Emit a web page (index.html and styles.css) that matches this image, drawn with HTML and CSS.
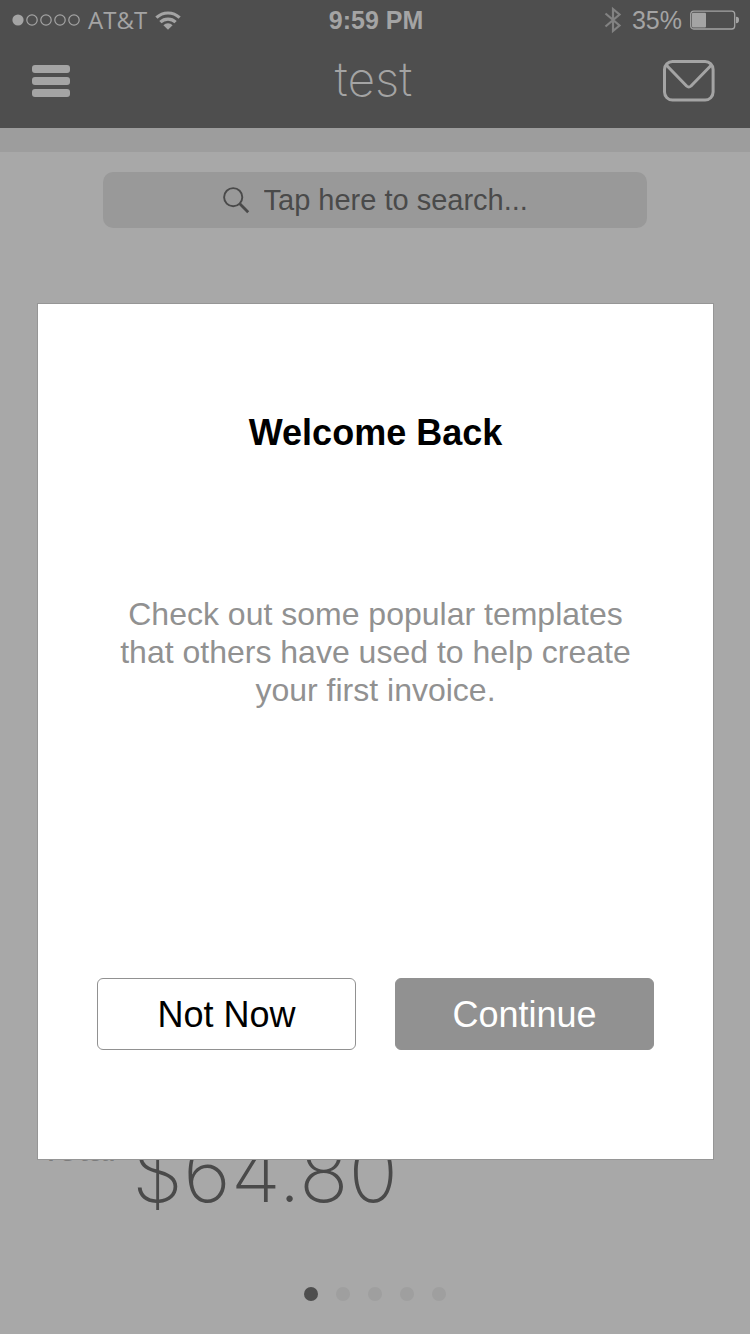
FILE: index.html
```html
<!DOCTYPE html>
<html lang="en">
<head>
<meta charset="utf-8">
<meta name="viewport" content="width=device-width, initial-scale=1">
<title>test</title>
<link rel="stylesheet" href="styles.css">
</head>
<body>
<div class="app">
  <header class="header">
    <div class="status">
      <div class="status-left">
        <svg class="signal" width="68" height="12" viewBox="0 0 68 12" aria-hidden="true">
          <circle cx="6" cy="6" r="5.6" fill="currentColor"/>
          <g fill="none" stroke="currentColor" stroke-width="1.2">
            <circle cx="20" cy="6" r="5.2"/><circle cx="34" cy="6" r="5.2"/><circle cx="48" cy="6" r="5.2"/><circle cx="62" cy="6" r="5.2"/>
          </g>
        </svg>
        <span class="carrier">AT&amp;T</span>
        <svg class="wifi" width="26" height="19" viewBox="0 0 26 19" aria-hidden="true">
          <g fill="none" stroke="currentColor" stroke-width="3.2">
            <path d="M1.4 6.7A16.7 16.7 0 0 1 24.6 6.7"/>
            <path d="M5.4 11.2A11 11 0 0 1 20.6 11.2"/>
          </g>
          <path d="M8.4 14.2A6.3 6.3 0 0 1 17.6 14.2L13 18.8Z" fill="currentColor"/>
        </svg>
      </div>
      <time class="clock">9:59 PM</time>
      <div class="status-right">
        <svg class="bluetooth" width="18" height="28" viewBox="0 0 18 28" aria-hidden="true">
          <path d="M1.5 7.5L15.5 19.5L9 25V3L15.5 8.5L1.5 20.5" fill="none" stroke="currentColor" stroke-width="2.2"/>
        </svg>
        <span>35%</span>
        <svg class="battery" width="50" height="20" viewBox="0 0 50 20" aria-hidden="true">
          <rect x=".7" y="1.2" width="44" height="17.8" rx="3" fill="none" stroke="currentColor" stroke-width="1.3"/>
          <rect x="2" y="2.8" width="14" height="14.8" rx="1" fill="currentColor"/>
          <path d="M46 6.8C48.4 6.8 49 8 49 10S48.4 13.2 46 13.2Z" fill="currentColor"/>
        </svg>
      </div>
    </div>
    <nav class="nav">
      <button class="icon-button" type="button" aria-label="Menu">
        <svg width="38" height="32" viewBox="0 0 38 32" aria-hidden="true">
          <g fill="currentColor"><rect width="38" height="8" rx="3"/><rect y="12" width="38" height="8" rx="3"/><rect y="24" width="38" height="8" rx="3"/></g>
        </svg>
      </button>
      <h1 class="title">test</h1>
      <button class="icon-button icon-button-end" type="button" aria-label="Messages">
        <svg width="52" height="42" viewBox="0 0 52 42" aria-hidden="true">
          <g fill="none" stroke="currentColor" stroke-width="3" stroke-linejoin="round">
            <rect x="1.5" y="1.5" width="48.6" height="38.6" rx="8"/>
            <path d="M3.5 5.2L23.6 26Q25.8 28 28 26L48.2 5.2"/>
          </g>
        </svg>
      </button>
    </nav>
  </header>
  <main class="main">
    <label class="search">
      <svg width="27" height="27" viewBox="0 0 27 27" aria-hidden="true">
        <circle cx="10.2" cy="10.2" r="9.1" fill="none" stroke="currentColor" stroke-width="1.9"/>
        <path d="M16.8 16.8L25.2 25.2" stroke="currentColor" stroke-width="2.8"/>
      </svg>
      <input class="search-input" type="text" placeholder="Tap here to search..." aria-label="Search">
    </label>
    <div class="summary">
      <span class="summary-label">Total</span>
      <span class="summary-amount">$64.80</span>
    </div>
    <div class="pager"><span class="dot dot-active"></span><span class="dot"></span><span class="dot"></span><span class="dot"></span><span class="dot"></span></div>
    <div class="overlay">
      <section class="dialog" role="dialog" aria-labelledby="dialog-title">
        <h2 class="dialog-title" id="dialog-title">Welcome Back</h2>
        <p class="dialog-text">Check out some popular templates that others have used to help create your first invoice.</p>
        <div class="actions">
          <button class="button" type="button">Not Now</button>
          <button class="button button-primary" type="button">Continue</button>
        </div>
      </section>
    </div>
  </main>
</div>
</body>
</html>
```
FILE: styles.css
```css
* { box-sizing: border-box; }

body {
  margin: 0;
  background: #a8a8a8;
  font-family: "Liberation Sans", Arial, sans-serif;
}

.app {
  display: flex;
  flex-direction: column;
  min-height: 100vh;
}

.header {
  background: #4e4e4e;
  color: #a4a4a4;
}

.status {
  display: grid;
  grid-template-columns: 1fr auto 1fr;
  align-items: center;
  height: 40px;
  padding: 0 10px 0 12px;
  font-size: 25px;
}

.status-left,
.status-right {
  display: flex;
  align-items: center;
  gap: 8px;
}

.status-right { justify-content: flex-end; }

.carrier {
  font-family: "Open Sans", sans-serif;
  font-size: 24px;
  line-height: 36px;
}

.clock { font-weight: 700; }

.bluetooth {
  margin-right: 2px;
  color: #828282;
}

.nav {
  display: grid;
  grid-template-columns: 1fr auto 1fr;
  align-items: center;
  height: 88px;
  padding: 0 35px 6px 32px;
}

.icon-button {
  justify-self: start;
  display: flex;
  padding: 0;
  border: 0;
  background: none;
  color: inherit;
}

.icon-button-end { justify-self: end; }

.title {
  margin: 0;
  padding-bottom: 4px;
  font-family: Inter, sans-serif;
  font-size: 48px;
  font-weight: 200;
  line-height: 56px;
}

.main {
  position: relative;
  flex: 1;
  display: flex;
  flex-direction: column;
  align-items: center;
  padding-bottom: 33px;
  border-top: 24px solid #9d9d9d;
}

.search {
  display: flex;
  align-items: center;
  justify-content: center;
  gap: 14px;
  width: calc(100% - 206px);
  height: 56px;
  margin-top: 20px;
  border-radius: 10px;
  background: #999;
  color: #4a4a4a;
}

.search-input {
  width: 264px;
  padding: 0;
  border: 0;
  outline: 0;
  background: none;
  color: inherit;
  font: 29px "Liberation Sans", Arial, sans-serif;
}

.search-input::placeholder {
  color: inherit;
  opacity: 1;
}

.summary {
  align-self: stretch;
  display: flex;
  gap: 16px;
  margin-top: auto;
  padding: 0 40px;
}

.summary-label {
  color: #7c7c7c;
  font-size: 36px;
  line-height: 52px;
}

.summary-amount {
  color: #4a4a4a;
  font-family: Inter, sans-serif;
  font-size: 82px;
  font-weight: 200;
  line-height: 100px;
}

.pager {
  display: flex;
  gap: 18px;
  margin-top: 64px;
}

.dot {
  width: 14px;
  height: 14px;
  border-radius: 50%;
  background: #9f9f9f;
}

.dot-active { background: #4e4e4e; }

.overlay {
  position: absolute;
  inset: -24px 0 0;
  display: flex;
  align-items: center;
  justify-content: center;
  padding: 0 36px 0 37px;
}

.dialog {
  width: 100%;
  padding: 109px 59px;
  border: 1px solid #969696;
  background: #fff;
  text-align: center;
}

.dialog-title {
  margin: 0;
  font-size: 36px;
  line-height: 40px;
}

.dialog-text {
  margin: 142px 0 269px;
  padding: 0 16px;
  color: #919191;
  font-size: 32px;
  line-height: 38px;
}

.actions {
  display: grid;
  grid-template-columns: 1fr 1fr;
  gap: 39px;
}

.button {
  height: 72px;
  padding: 2px 0 0;
  border: 1px solid #919191;
  border-radius: 6px;
  background: #fff;
  color: #000;
  font: 36px "Liberation Sans", Arial, sans-serif;
}

.button-primary {
  background: #919191;
  color: #fff;
}
```
